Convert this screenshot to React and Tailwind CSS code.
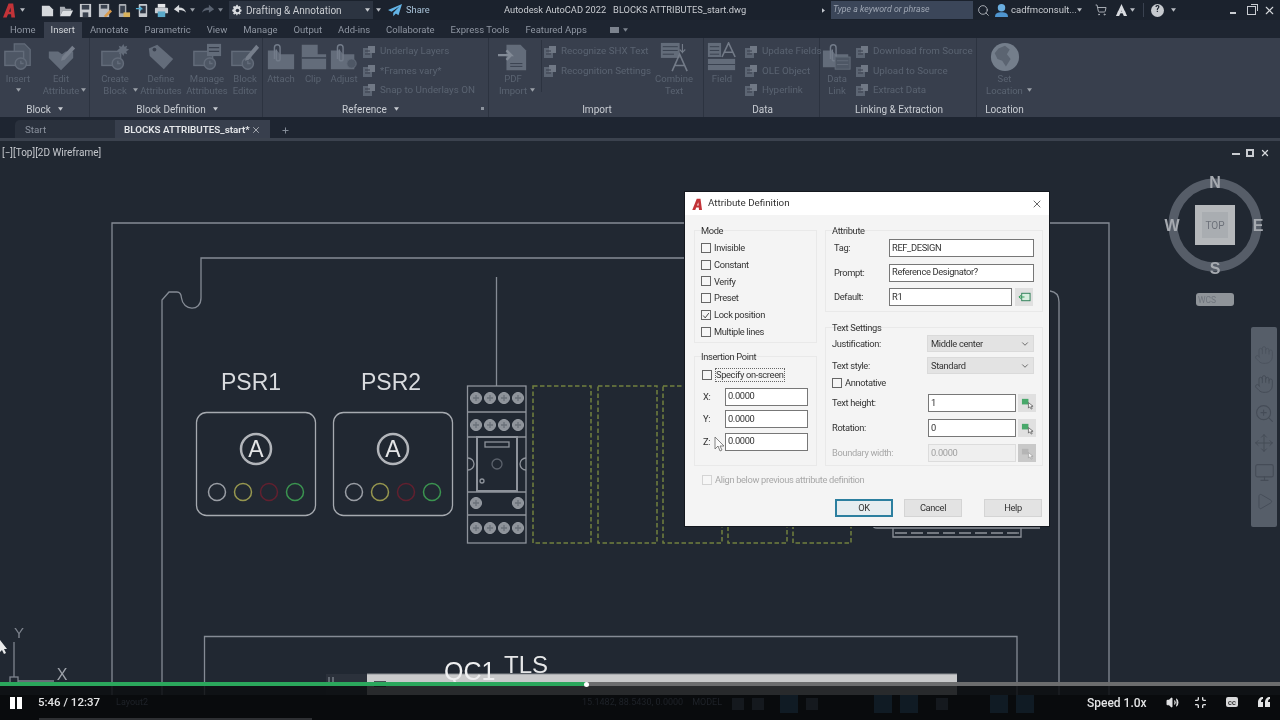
import React from "react";
import {
  ChevronDown,
  X,
  Search,
  ShoppingCart,
  Hand,
  ZoomIn,
  Move,
  Monitor,
  Play,
  Volume2,
  Minimize,
  Plus,
} from "lucide-react";

const Caret = ({ className = "" }) => (
  <svg viewBox="0 0 6 4" className={`w-[5px] h-[4px] shrink-0 ${className}`}>
    <path d="M0 0h6L3 4z" fill="currentColor" />
  </svg>
);

// ---------- title bar icons ----------
const Logo = ({ className }) => (
  <svg viewBox="0 0 14 16" className={className}>
    <path d="M0 16 6 1h5l2 15H9l-.3-3.400H5.400L4 16zM6.500 10h2L8 5.500z" fill="#c23338" fillRule="evenodd" />
  </svg>
);

const Qat = ({ children }) => (
  <svg viewBox="0 0 16 16" className="w-[15px] h-[15px] shrink-0">
    {children}
  </svg>
);

const qatIcons = [
  <path key="a" d="M2 3h8l4 4v7H2z" fill="#d5d8dc" />,
  <g key="b">
    <path d="M1 4h5l1 2h6v2H4l-3 6z" fill="#a8adb4" />
    <path d="M4 8h11l-3 6H1z" fill="#dcdfe2" />
  </g>,
  <g key="c">
    <rect x="2" y="1" width="12" height="14" fill="#c9ccd1" />
    <rect x="4" y="2" width="8" height="5" fill="#39414e" />
    <rect x="5" y="10" width="6" height="5" fill="#39414e" />
  </g>,
  <g key="d">
    <rect x="2" y="1" width="11" height="14" fill="#b8bcc2" />
    <rect x="4" y="2" width="7" height="4" fill="#39414e" />
    <path d="M8 13l6-6 2 2-6 6H8z" fill="#d99a4a" />
  </g>,
  <g key="e">
    <rect x="3" y="1" width="8" height="14" rx="1" fill="#a9adb3" />
    <rect x="4.500" y="3" width="5" height="8" fill="#39414e" />
    <rect x="8" y="10" width="7" height="5" fill="#d8b25c" />
  </g>,
  <g key="f">
    <rect x="4" y="1" width="9" height="14" rx="1" fill="#c5c9ce" />
    <rect x="5.500" y="3" width="6" height="8" fill="#2f3744" />
    <path d="M1 6h6l-2-2M7 6 5 8" stroke="#55b2d8" strokeWidth="1.400" fill="none" />
  </g>,
  <g key="g">
    <rect x="4" y="1" width="8" height="4" fill="#e4e6e8" />
    <rect x="1" y="5" width="14" height="6" rx="1" fill="#c7cbd0" />
    <rect x="4" y="9" width="8" height="6" fill="#5aa9c9" />
  </g>,
];

const TitleBar = () => (
  <div className="flex items-center h-[20px] bg-[#1b222d] text-[#c3c7cd] text-[10px] shrink-0">
    <Logo className="w-[13px] h-[16px] ml-[3px]" />
    <Caret className="ml-[4px] text-[#b9bdc3]" />
    <div className="flex items-center gap-[4px] ml-[15px]">
      {qatIcons.map((icon, i) => (
        <Qat key={i}>{icon}</Qat>
      ))}
    </div>
    <svg viewBox="0 0 16 16" className="w-[14px] h-[14px] ml-[4px] shrink-0">
      <path d="M1 7l6-5v3c4 0 7 2 8 6-2-2-4-3-8-3v3z" fill="#d5d8dc" />
    </svg>
    <Caret className="ml-[3px] w-[3px] text-[#9aa0a8]" />
    <svg viewBox="0 0 16 16" className="w-[14px] h-[14px] ml-[6px] shrink-0">
      <path d="M15 7 9 2v3C5 5 2 7 1 11c2-2 4-3 8-3v3z" fill="#596270" />
    </svg>
    <Caret className="ml-[3px] w-[3px] text-[#7d848f]" />
    <div className="flex items-center w-[144px] h-[18px] ml-[6px] bg-[#2c3441] pl-[2px]">
      <svg viewBox="0 0 16 16" className="w-[13px] h-[13px]">
        <path
          d="M8 1l1 2 2-.5 1 1.500-1 2 2 1v2l-2 1 1 2-1.500 1-2-1-1 2H7l-1-2-2 1-1.500-1 1-2-2-1v-2l2-1-1-2 1-1.500 2 .5L7 1z"
          fill="#d8dbdf"
        />
        <circle cx="8" cy="8" r="2.200" fill="#2c3441" />
      </svg>
      <span className="ml-[2px] text-[10px] text-[#c9ccd1]">Drafting &amp; Annotation</span>
      <Caret className="ml-auto mr-[3px] text-[#c9ccd1]" />
    </div>
    <Caret className="ml-[3px] w-[4px] text-[#b9bdc3]" />
    <svg viewBox="0 0 16 16" className="w-[14px] h-[14px] ml-[7px] shrink-0">
      <path d="M16 1 0 8l4 2 9-6-7 7v4l3-3 3 2z" fill="#63b4e6" />
    </svg>
    <span className="ml-[4px] w-[26px] text-[#a9c3d8] text-[9.300px]">Share</span>
    <span className="ml-[72px] w-[318px] text-[9.300px] text-[#c9ccd1] whitespace-pre">
      Autodesk AutoCAD 2022   BLOCKS ATTRIBUTES_start.dwg
    </span>
    <svg viewBox="0 0 4 6" className="w-[3px] h-[5px] shrink-0 text-[#c3c7cd]">
      <path d="M0 0l4 3-4 3z" fill="currentColor" />
    </svg>
    <div className="flex items-center w-[142px] h-[18px] ml-[6px] bg-[#3b4659] pl-[2px] text-[#9ea6b3] text-[8.800px] italic">
      Type a keyword or phrase
    </div>
    <Search size={13} className="ml-[4px] text-[#c0c4ca]" strokeWidth={1.500} />
    <svg viewBox="0 0 14 16" className="w-[13px] h-[15px] ml-[5px] shrink-0">
      <circle cx="7" cy="5" r="4" fill="#6aaee0" />
      <path d="M0 15c0-4 3-5 7-5s7 1 7 5z" fill="#4f95cf" />
    </svg>
    <span className="ml-[3px] text-[9.500px] text-[#c9ccd1] w-[66px]">cadfmconsult...</span>
    <Caret className="w-[3px] text-[#b9bdc3]" />
    <ShoppingCart size={12} className="ml-[13px] text-[#a8adb4]" />
    <svg viewBox="0 0 14 14" className="w-[13px] h-[13px] ml-[8px] shrink-0">
      <path d="M7 0l6 13H9.500L7 7l-2.500 6H1z" fill="#d8dbdf" />
      <rect x="3" y="8" width="8" height="2" fill="#d8dbdf" />
    </svg>
    <Caret className="ml-[2px] w-[3px] text-[#b9bdc3]" />
    <div className="w-px h-[14px] bg-[#3a4250] ml-[8px]" />
    <div className="flex items-center justify-center w-[13px] h-[13px] ml-[7px] rounded-full bg-[#c6c9ce] text-[#1b222d] text-[9px] font-bold">
      ?
    </div>
    <Caret className="ml-[7px] w-[3px] text-[#b9bdc3]" />
    <div className="w-[6px] h-[1.500px] bg-[#c9ccd1] ml-[54px] mt-[6px]" />
    <div className="relative w-[9px] h-[9px] ml-[11px] border border-[#c9ccd1]">
      <div className="absolute -top-[3px] -right-[3px] w-[7px] h-[7px] border-t border-r border-[#c9ccd1]" />
    </div>
    <X size={13} strokeWidth={2} className="ml-[7px] text-[#d5d8dc]" />
  </div>
);

const tabNames = [
  "Home",
  "Insert",
  "Annotate",
  "Parametric",
  "View",
  "Manage",
  "Output",
  "Add-ins",
  "Collaborate",
  "Express Tools",
  "Featured Apps",
];

const RibbonTabs = () => (
  <div className="flex items-end h-[18px] bg-[#1e2531] pl-[2px] text-[9.500px] shrink-0">
    {tabNames.map((t) =>
      t === "Insert" ? (
        <div key={t} className="flex items-center h-[16px] pt-[1px] px-[7px] bg-[#383f4d] text-[#d4d7db]">
          {t}
        </div>
      ) : (
        <div key={t} className="flex items-center h-[16px] pt-[1px] px-[8px] text-[#8f96a2]">
          {t}
        </div>
      ),
    )}
    <div className="flex items-center gap-[4px] h-[16px] ml-[15px]">
      <div className="w-[9px] h-[6px] bg-[#7c838e]" />
      <Caret className="w-[3px] text-[#7c838e]" />
    </div>
  </div>
);

// ---------- ribbon icons ----------
const Ico = ({ children, className = "w-[30px] h-[30px]" }) => (
  <svg viewBox="0 0 32 32" className={`shrink-0 ${className}`}>
    {children}
  </svg>
);

const c1 = "#636c7a";
const c2 = "#4e5765";

const BlockBase = () => (
  <g fill="none" stroke={c1} strokeWidth="1.500">
    <rect x="2" y="10" width="20" height="15" fill={c2} />
    <circle cx="19" cy="23" r="6" fill={c2} />
    <path d="M19 20v3h3" />
  </g>
);

const Clip = () => (
  <path
    d="M9 18V6a3 3 0 0 1 6 0v12a2 2 0 0 1-4 0V8"
    fill="none"
    stroke="#737c8a"
    strokeWidth="1.500"
  />
);

const icons = {
  insert: (
    <>
      <path d="M12 2h11l6 6v17H12z" fill={c2} stroke={c1} strokeWidth="1.300" />
      <BlockBase />
    </>
  ),
  edit: (
    <>
      <path d="M3 10h10l4 3 4-3h8v7L16 30 3 17z" fill={c1} />
      <path d="M17 16 28 4l3 3-11 12-4 1z" fill="#767e8b" />
    </>
  ),
  create: (
    <>
      <BlockBase />
      <path d="M25 2l1 3 3-1-1 3 3 1-3 2 1 3-3-1-1 3-2-3-3 1 1-3-3-1 3-2-1-3 3 1z" fill={c1} />
    </>
  ),
  define: (
    <>
      <path d="M3 7 12 3l17 15-10 11L4 15z" fill={c1} />
      <circle cx="9" cy="8" r="2" fill="#383f4d" />
    </>
  ),
  manage: (
    <>
      <BlockBase />
      <rect x="16" y="2" width="15" height="13" fill={c1} />
      <path d="M18 6h11M18 10h11" stroke="#383f4d" strokeWidth="1.500" />
    </>
  ),
  editor: (
    <>
      <BlockBase />
      <path d="M17 16 28 3l3 3-11 13-4 1z" fill="#767e8b" />
    </>
  ),
  attach: (
    <>
      <path d="M2 9h10l3 4h15v16H2z" fill={c1} />
      <Clip />
    </>
  ),
  clip: (
    <>
      <path d="M4 3h17v10h9v16H4z" fill={c1} />
      <path d="M4 17h26" stroke="#383f4d" strokeWidth="1.500" />
    </>
  ),
  adjust: (
    <>
      <path d="M2 9h10l3 4h12v16H2z" fill={c1} />
      <Clip />
      <circle cx="24" cy="23" r="5" fill={c2} stroke={c1} />
    </>
  ),
  pdf: (
    <>
      <path d="M9 3h15l6 6v21H9z" fill={c1} />
      <path d="M0 14h14l-5-5M14 14l-5 5" stroke="#828a96" strokeWidth="2.500" fill="none" />
      <path d="M13 23h13M13 26h13" stroke="#383f4d" />
    </>
  ),
  combine: (
    <>
      <rect x="2" y="1" width="20" height="16" fill={c1} />
      <path d="M4 5h16M4 9h16M4 13h12" stroke="#383f4d" />
      <path d="M14 31 22 13l8 18M17 25h10" fill="none" stroke="#737b88" strokeWidth="1.700" />
      <path d="M25 2v9l-3-3M25 11l3-3" stroke="#737b88" strokeWidth="1.200" fill="none" />
    </>
  ),
  field: (
    <>
      <rect x="1" y="1" width="14" height="15" fill={c1} />
      <path d="M3 5h10M3 9h10M3 13h10" stroke="#383f4d" />
      <path d="M16 16 23 1l7 15M19 11h8" fill="none" stroke="#737b88" strokeWidth="1.700" />
      <rect x="1" y="18" width="29" height="12" fill={c1} />
      <path d="M1 24h29" stroke="#383f4d" />
    </>
  ),
  datalink: (
    <>
      <path d="M1 9h10l3 4h14v14H1z" fill={c1} />
      <Clip />
      <rect x="14" y="16" width="16" height="13" fill={c2} stroke={c1} />
      <path d="M16 20h12M16 24h12" stroke={c1} />
    </>
  ),
  globe: (
    <>
      <circle cx="16" cy="16" r="15" fill="#747e8b" />
      <path d="M9 7l7-3 5 4-3 5 4 5-5 8-4-6-5-2-3-6z" fill="#5b6471" />
    </>
  ),
};

const smallIcon = (
  <svg viewBox="0 0 14 14" className="w-[14px] h-[14px] shrink-0">
    <rect x="1" y="3" width="9" height="10" fill="#5c6573" />
    <rect x="6" y="1" width="7" height="7" fill="#707885" />
    <path d="M3 6h5M3 9h5" stroke="#383f4d" />
  </svg>
);

const Tool = ({ icon, lines, width, caret }) => (
  <div className={`flex flex-col items-center pt-[4px] shrink-0 relative ${width}`}>
    <Ico>{icons[icon]}</Ico>
    <div className="mt-[1px] text-center text-[9.500px] leading-[12px] text-[#5a6371] whitespace-nowrap">
      {lines.map((l) => (
        <div key={l}>{l}</div>
      ))}
      {caret === "below" && <Caret className="mx-auto mt-[3px] w-[3px] h-[3px] text-[#9aa0a8]" />}
    </div>
    {caret === "side" && (
      <Caret className="absolute right-0 top-[50px] w-[3px] h-[3px] text-[#9aa0a8]" />
    )}
  </div>
);

const SmallList = ({ items, className = "" }) => (
  <div className={`flex flex-col pt-[4px] shrink-0 ${className}`}>
    {items.map((t) => (
      <div key={t} className="flex items-center h-[19.500px] text-[9.800px] text-[#5a6371] whitespace-nowrap">
        {smallIcon}
        <span className="ml-[4px]">{t}</span>
      </div>
    ))}
  </div>
);

const Panel = ({ className, title, caret, launcher, children }) => (
  <div className={`flex flex-col shrink-0 border-r border-[#2c3340] ${className}`}>
    <div className="flex h-[62px]">{children}</div>
    <div className={`relative flex items-center justify-center gap-[7px] h-[17px] pt-[1px] text-[10px] text-[#c8ccd2] ${launcher ? "pr-[12px]" : ""}`}>
      {title}
      {caret && <Caret className="text-[#c8ccd2]" />}
      {launcher && <div className="absolute right-[4px] top-[7px] w-[3px] h-[3px] bg-[#8b929c]" />}
    </div>
  </div>
);

const Ribbon = () => (
  <div className="flex h-[79px] bg-[#383f4d] shrink-0">
    <Panel className="w-[90px]" title="Block" caret>
      <Tool icon="insert" lines={["Insert"]} width="w-[36px]" caret="below" />
      <Tool icon="edit" lines={["Edit", "Attribute"]} width="w-[50px]" caret="side" />
    </Panel>
    <Panel className="w-[173px] pl-[2px]" title="Block Definition" caret>
      <Tool icon="create" lines={["Create", "Block"]} width="w-[46px]" caret="side" />
      <Tool icon="define" lines={["Define", "Attributes"]} width="w-[46px]" />
      <Tool icon="manage" lines={["Manage", "Attributes"]} width="w-[46px]" />
      <Tool icon="editor" lines={["Block", "Editor"]} width="w-[30px]" />
    </Panel>
    <Panel className="w-[226px] pl-[2px]" title="Reference" caret launcher>
      <Tool icon="attach" lines={["Attach"]} width="w-[32px]" />
      <Tool icon="clip" lines={["Clip"]} width="w-[32px]" />
      <Tool icon="adjust" lines={["Adjust"]} width="w-[30px]" />
      <SmallList className="ml-[3px]" items={["Underlay Layers", "*Frames vary*", "Snap to Underlays ON"]} />
    </Panel>
    <Panel className="w-[215px] pl-[2px]" title="Import">
      <Tool icon="pdf" lines={["PDF", "Import"]} width="w-[44px]" caret="side" />
      <div className="w-px h-[52px] mt-[2px] ml-[6px] bg-[#2c3340]" />
      <SmallList className="w-[109px] ml-[1px]" items={["Recognize SHX Text", "Recognition Settings"]} />
      <Tool icon="combine" lines={["Combine", "Text"]} width="w-[44px]" />
    </Panel>
    <Panel className="w-[116px] pl-[2px]" title="Data">
      <Tool icon="field" lines={["Field"]} width="w-[32px]" />
      <SmallList className="ml-[6px]" items={["Update Fields", "OLE Object", "Hyperlink"]} />
    </Panel>
    <Panel className="w-[157px] pl-[2px]" title="Linking &amp; Extraction">
      <Tool icon="datalink" lines={["Data", "Link"]} width="w-[30px]" />
      <SmallList className="ml-[3px]" items={["Download from Source", "Upload to Source", "Extract  Data"]} />
    </Panel>
    <Panel className="w-[55px] border-r-0" title="Location">
      <Tool icon="globe" lines={["Set", "Location"]} width="w-full" caret="side" />
    </Panel>
  </div>
);

const DocTabs = () => (
  <div className="flex items-end h-[21px] bg-[#1e2531] pl-[15px] text-[9.800px] shrink-0">
    <div className="flex items-center w-[100px] h-[18px] pt-[2px] pl-[10px] bg-[#2a313d] text-[#8a919d] rounded-tl-[5px]">Start</div>
    <div className="flex items-center w-[155px] h-[18px] pt-[2px] pl-[9px] bg-[#383f4d] text-[#e4e6e9] font-semibold">
      BLOCKS ATTRIBUTES_start*
      <X size={10} strokeWidth={2} className="ml-auto mr-[9px] text-[#b9bdc3]" />
    </div>
    <div className="flex items-center justify-center w-[30px] h-[18px] pt-[2px] text-[#8a919d]">
      <Plus size={9} strokeWidth={2.500} />
    </div>
  </div>
);

// ---------- drawing ----------
const line = "#858b95";

const Screws = ({ y, xs = [476, 490, 504, 518] }) =>
  xs.map((x) => (
    <g key={x}>
      <circle cx={x} cy={y} r="5.500" fill="#8e939a" stroke="#9a9fa6" />
      <path d={`M${x - 3} ${y}h6M${x} ${y - 3}v6`} stroke="#6b717a" strokeWidth="1.300" />
    </g>
  ));

const Psr = ({ x, cx, name, tx }) => (
  <g>
    <text x={tx} y="390" textAnchor="middle" fill="#d9dbde" className="font-['Liberation_Sans',sans-serif] text-[23px]">
      {name}
    </text>
    <rect x={x} y="412.500" width="119" height="103" rx="10" fill="none" stroke="#a6aab0" strokeWidth="1.300" />
    <circle cx={cx} cy="449" r="15" fill="none" stroke="#b2b5ba" strokeWidth="2.500" />
    <text x={cx} y="457" textAnchor="middle" fill="#e4e5e7" className="font-['Liberation_Sans',sans-serif] text-[23px]">
      A
    </text>
    {[
      ["#9a9ea5", -39],
      ["#97974f", -13],
      ["#62202f", 13],
      ["#3b9450", 39],
    ].map(([col, dx]) => (
      <circle key={dx} cx={cx + dx} cy="492" r="8.500" fill="none" stroke={col} strokeWidth="1.500" />
    ))}
  </g>
);

const Drawing = () => (
  <svg viewBox="0 141 1280 579" className="block w-full h-full">
    <g fill="none" stroke={line} strokeWidth="1.300">
      <path d="M112 720V223H1109V720" />
      <path d="M162 720V300L169 292H177Q181 292 181.500 298C183 311 201 312 201 298V258H1050" />
      <path d="M1047 291H1050Q1059 292 1059 302V720" />
      <path d="M204.500 720V636.500H1017V720" />
      <path d="M496.500 277V386" />
    </g>

    <Psr x={196.500} cx={256} name="PSR1" tx={251} />
    <Psr x={333.500} cx={393} name="PSR2" tx={391} />

    {/* contactor */}
    <g fill="none" stroke="#8e939b" strokeWidth="1.300">
      <rect x="467.500" y="386" width="58.500" height="157" />
      <path d="M467.500 412H526M467.500 437H526M467.500 492H526M467.500 515H526" />
      <rect x="477" y="437" width="40" height="54" strokeWidth="2" />
      <rect x="485" y="442" width="24" height="5" />
      <circle cx="497" cy="464" r="5" stroke="#5c626c" />
      <circle cx="482" cy="481" r="2" />
      <path d="M468 458a6 6 0 0 1 0 12M526 458a6 6 0 0 0 0 12" />
    </g>
    <Screws y={398} />
    <Screws y={425} />
    <Screws y={503} xs={[476, 518]} />
    <Screws y={528} />

    {/* empty slots */}
    <g fill="none" stroke="#71803f" strokeWidth="1.500" strokeDasharray="4.500 2.500">
      <rect x="533" y="386" width="58" height="157" />
      <rect x="598" y="386" width="59" height="157" />
      <rect x="663" y="386" width="59" height="157" />
      <rect x="728" y="386" width="59" height="157" />
      <rect x="793" y="386" width="58" height="157" />
    </g>

    {/* part under the dialog */}
    <g fill="none" stroke="#8e939b" strokeWidth="1.300">
      <path d="M873 522v3q0 3 4 3H1040" />
      <path d="M893 528v9H1021V528" />
      <path d="M895 533H1019" strokeDasharray="12 4" />
    </g>

    {/* horizontal scroll bar of the drawing */}
    <rect x="326" y="674" width="41" height="21" fill="#2b313b" />
    <path d="M329 677v5M333 677v5" stroke="#767c85" strokeWidth="1.500" />
    <rect x="367" y="674" width="590" height="21" fill="#c9cacb" />
    <path d="M367 674H957" stroke="#8d9095" />
    <rect x="374" y="681" width="12" height="6" fill="#4a4e54" />

    <text x="444" y="680" fill="#eeeff0" className="font-['Liberation_Sans',sans-serif] text-[25px]">
      QC1
    </text>
    <text x="504" y="673" fill="#e6e7e8" className="font-['Liberation_Sans',sans-serif] text-[24px]">
      TLS
    </text>

    {/* ucs icon */}
    <g fill="none" stroke="#7e848e" strokeWidth="1.300">
      <path d="M14 642V677M18 681H54" />
      <rect x="10" y="677" width="8" height="6" />
    </g>
    <text x="19" y="638" textAnchor="middle" fill="#7e848e" className="font-['Liberation_Sans',sans-serif] text-[15px]">
      Y
    </text>
    <text x="62" y="680" textAnchor="middle" fill="#9da2a9" className="font-['Liberation_Sans',sans-serif] text-[16px]">
      X
    </text>
    <path d="M0 640l7 9-3 0 2 4-2 1-2-4-2 2z" fill="#e9eaeb" />

    {/* view cube */}
    <circle cx="1215" cy="225" r="42" fill="none" stroke="#565d68" strokeWidth="9" />
    <g className="font-['Liberation_Sans',sans-serif] text-[16px] font-bold" fill="#a6aab0" textAnchor="middle">
      <text x="1215" y="188">N</text>
      <text x="1172" y="231">W</text>
      <text x="1258" y="231">E</text>
      <text x="1215" y="274">S</text>
    </g>
    <rect x="1195" y="205" width="40" height="40" fill="#b5b8bb" />
    <rect x="1202" y="212" width="26" height="26" fill="#a9adb1" />
    <text x="1215" y="229" textAnchor="middle" fill="#6d727a" className="font-['Roboto',sans-serif] text-[10px]">
      TOP
    </text>
    <rect x="1196" y="293" width="38" height="13" rx="3" fill="#8f9499" />
    <text x="1198" y="303" fill="#6f757d" className="font-['Roboto',sans-serif] text-[8.500px]">
      WCS
    </text>
  </svg>
);

// ---------- dialog ----------
const Check = ({ checked, label, dim, focus, className = "" }) => (
  <div className={`flex items-center ${className}`}>
    <div
      className={`flex items-center justify-center w-[10px] h-[10px] border bg-[#f6f6f6] ${
        dim ? "border-[#d4d4d4]" : "border-[#666]"
      }`}
    >
      {checked && (
        <svg viewBox="0 0 10 10" className="w-[9px] h-[9px]">
          <path d="M1.500 5l2.500 3 4.500-6" fill="none" stroke="#444" strokeWidth="1.200" />
        </svg>
      )}
    </div>
    <span
      className={`ml-[3px] ${dim ? "text-[#a8a8a8]" : "text-[#333]"} ${
        focus ? "border border-dotted border-[#666] leading-[12px]" : ""
      }`}
    >
      {label}
    </span>
  </div>
);

const Group = ({ title, className = "", children }) => (
  <div className={`flex flex-col border border-[#e9e9e9] px-[6px] ${className}`}>
    <div className="-mt-[7px] h-[14px] leading-[14px] text-[#333]">{title}</div>
    {children}
  </div>
);

const Input = ({ value, className = "", dim }) => (
  <div
    className={`flex items-center h-[18px] pl-[2px] pb-[1px] ${
      dim
        ? "border border-[#dcdcdc] bg-[#efefef] text-[#a0a0a0]"
        : "border border-[#777] bg-white text-[#333]"
    } ${className}`}
  >
    {value}
  </div>
);

const Pick = ({ dim }) => (
  <div className={`flex items-center justify-center w-[18px] h-[18px] ml-[2px] ${dim ? "bg-[#c9c9c9]" : "bg-[#e0e0e0]"}`}>
    <svg viewBox="0 0 14 14" className="w-[13px] h-[13px]">
      <rect x="1" y="2" width="7" height="6" fill={dim ? "#b5b5b5" : "#48a86a"} />
      <path d="M8 6v6l1.500-1.500L11 13l1-.5-1-2.500h2z" fill="#f5f5f5" stroke={dim ? "#999" : "#444"} strokeWidth=".7" />
    </svg>
  </div>
);

const Select = ({ value, className = "" }) => (
  <div className={`flex items-center justify-between w-[107px] h-[17px] pl-[3px] pr-[3px] bg-[#e3e3e3] border border-[#dadada] text-[#333] ${className}`}>
    {value}
    <ChevronDown size={10} className="text-[#555]" />
  </div>
);

const Btn = ({ label, primary, className = "" }) => (
  <div
    className={`flex items-center justify-center w-[58px] h-[18px] border text-[#333] ${
      primary ? "border-[#2c7f9f] border-2 bg-[#e6edf0]" : "border-[#d4d4d4] bg-[#e3e3e3]"
    } ${className}`}
  >
    {label}
  </div>
);

const Dialog = () => (
  <div className="absolute left-[685px] top-[51px] w-[364px] h-[334px] flex flex-col bg-[#f4f4f4] text-[9.300px] tracking-[-0.35px] shadow-[0_0_0_1px_#14181f]">
    <div className="flex items-center h-[23px] bg-white px-[7px] shrink-0">
      <Logo className="w-[11px] h-[12px]" />
      <span className="ml-[5px] text-[9.800px] tracking-normal text-[#333]">Attribute Definition</span>
      <X size={12} strokeWidth={1.500} className="ml-auto mr-[-1px] text-[#333]" />
    </div>
    <div className="flex gap-[8px] pl-[9px] pt-[15px] shrink-0">
      <div className="flex flex-col w-[123px]">
        <Group title="Mode" className="h-[113px]">
          <div className="flex flex-col pt-[1.500px]">
            <Check label="Invisible" className="h-[16.800px]" />
            <Check label="Constant" className="h-[16.800px]" />
            <Check label="Verify" className="h-[16.800px]" />
            <Check label="Preset" className="h-[16.800px]" />
            <Check checked label="Lock position" className="h-[16.800px]" />
            <Check label="Multiple lines" className="h-[16.800px]" />
          </div>
        </Group>
        <Group title="Insertion Point" className="h-[110px] mt-[13px]">
          <Check focus label="Specify on-screen" className="h-[17px] mt-[2.500px] ml-[1px]" />
          <div className="flex flex-col gap-[4.500px] mt-[4px]">
            {["X:", "Y:", "Z:"].map((a) => (
              <div key={a} className="flex items-center">
                <span className="w-[24px] pl-[2px] text-[#333]">{a}</span>
                <Input value="0.0000" className="w-[83px]" />
              </div>
            ))}
          </div>
        </Group>
      </div>
      <div className="flex flex-col w-[218px]">
        <Group title="Attribute" className="h-[82px]">
          <div className="flex flex-col gap-[6.500px] mt-[1px]">
            <div className="flex items-center">
              <span className="w-[57px] pl-[2px] text-[#333]">Tag:</span>
              <Input value="REF_DESIGN" className="w-[145px]" />
            </div>
            <div className="flex items-center">
              <span className="w-[57px] pl-[2px] text-[#333]">Prompt:</span>
              <Input value="Reference Designator?" className="w-[145px]" />
            </div>
            <div className="flex items-center">
              <span className="w-[57px] pl-[2px] text-[#333]">Default:</span>
              <Input value="R1" className="w-[123px]" />
              <div className="flex items-center justify-center w-[18px] h-[18px] ml-[3px] bg-[#e0e0e0]">
                <svg viewBox="0 0 14 10" className="w-[13px] h-[10px]">
                  <rect x="4" y="1" width="9" height="8" fill="#d9eee0" stroke="#2b7d55" />
                  <path d="M1 5h6M1 5l2-2M1 5l2 2" stroke="#2b9d55" fill="none" />
                </svg>
              </div>
            </div>
          </div>
        </Group>
        <Group title="Text Settings" className="h-[139px] mt-[15px]">
          <div className="flex items-center justify-between">
            <span className="text-[#333]">Justification:</span>
            <Select value="Middle center" className="mr-[2px]" />
          </div>
          <div className="flex items-center justify-between mt-[5px]">
            <span className="text-[#333]">Text style:</span>
            <Select value="Standard" className="mr-[2px]" />
          </div>
          <Check label="Annotative" className="h-[14px] mt-[2px]" />
          <div className="flex items-center mt-[4px]">
            <span className="w-[96px] text-[#333]">Text height:</span>
            <Input value="1" className="w-[88px]" />
            <Pick />
          </div>
          <div className="flex items-center mt-[7px]">
            <span className="w-[96px] text-[#333]">Rotation:</span>
            <Input value="0" className="w-[88px]" />
            <Pick />
          </div>
          <div className="flex items-center mt-[7px]">
            <span className="w-[96px] text-[#a8a8a8]">Boundary width:</span>
            <Input dim value="0.0000" className="w-[88px]" />
            <Pick dim />
          </div>
        </Group>
      </div>
    </div>
    <Check dim label="Align below previous attribute definition" className="h-[18px] mt-[5px] ml-[17px]" />
    <div className="flex justify-end gap-[11px] mt-[10px] pr-[7px]">
      <Btn primary label="OK" />
      <Btn label="Cancel" />
      <Btn label="Help" className="ml-[11px]" />
    </div>
    {/* mouse pointer */}
    <svg viewBox="0 0 11 16" className="absolute left-[29px] top-[244px] w-[11px] h-[16px]">
      <path d="M1 1v12l3-3 2 5 2-1-2-4h4z" fill="#fafafa" stroke="#666" strokeWidth=".8" />
    </svg>
  </div>
);

const NavBar = () => (
  <div className="absolute right-[3px] top-[186px] flex flex-col items-center gap-[9px] w-[26px] h-[200px] pt-[18px] bg-[#565e69] rounded-[2px] text-[#454c57]">
    <Hand size={20} strokeWidth={1.200} className="opacity-60" />
    <Hand size={20} strokeWidth={1.200} />
    <ZoomIn size={21} strokeWidth={1.200} />
    <Move size={20} strokeWidth={1.200} />
    <Monitor size={21} strokeWidth={1.200} />
    <Play size={19} strokeWidth={1.200} />
  </div>
);

// ---------- video player overlay ----------
const Player = () => (
  <div className="absolute inset-x-0 bottom-0 flex flex-col h-[39px]">
    <div className="relative flex h-[4px] mt-[1px] bg-[#6c6d6e]">
      <div className="w-[586px] bg-[#2ba75c]" />
      <div className="absolute left-[584px] -top-[0.500px] w-[5px] h-[5px] rounded-full bg-white" />
    </div>
    <div className="h-[9px] bg-[#0c0e10]/85" />
    <div className="relative flex items-start flex-1 bg-[#090b0d] text-[11.500px] text-[#e3e4e5]">
      <div className="flex gap-[2px] ml-[10px] mt-[2px]">
        <div className="w-[5px] h-[12px] bg-white" />
        <div className="w-[5px] h-[12px] bg-white" />
      </div>
      <span className="ml-[16px] -mt-[1px] font-medium">5:46 / 12:37</span>
      <span className="ml-[16px] mt-[1px] text-[9px] text-[#1f2329]">Layout2</span>
      <span className="ml-[434px] mt-[1px] text-[9px] text-[#1f2329]">15.1482, 88.5430, 0.0000</span>
      <span className="ml-[9px] mt-[1px] text-[9px] text-[#1f2329]">MODEL</span>
      <div className="flex items-center gap-[8px] ml-[10px]">
        <div className="w-[12px] h-[12px] bg-[#15191e]" />
        <div className="w-[12px] h-[12px] bg-[#15191e]" />
        <div className="w-[18px] h-[18px] ml-[8px] bg-[#101b24]" />
        <div className="w-[12px] h-[12px] bg-[#15191e]" />
        <div className="w-[18px] h-[18px] ml-[48px] bg-[#101b24]" />
        <div className="w-[18px] h-[18px] bg-[#101b24]" />
        <div className="w-[12px] h-[12px] ml-[10px] bg-[#15191e]" />
        <div className="w-[18px] h-[18px] ml-[34px] bg-[#101b24]" />
        <div className="w-[18px] h-[18px] bg-[#101b24]" />
      </div>
      <span className="absolute left-[1087px] -top-[1px] text-[12px] font-medium">Speed 1.0x</span>
      <Volume2 size={13} fill="#e3e4e5" className="absolute left-[1166px] top-[1px]" />
      <Minimize size={13} strokeWidth={2.500} className="absolute left-[1194px] top-[1px]" />
      <div className="absolute left-[1226px] top-[2px] flex items-center justify-center w-[12px] h-[10px] rounded-[2px] bg-[#d8d9da] text-[#222] text-[6px] font-bold">
        CC
      </div>
      <svg viewBox="0 0 12 10" className="absolute left-[1258px] top-[2px] w-[12px] h-[10px]">
        <path d="M0 10V5.500C0 2 2 0 5 0v2C3.500 2 3 3.500 3 5h2v5zM7 10V5.500C7 2 9 0 12 0v2c-1.500 0-2 1.500-2 3h2v5z" fill="#e3e4e5" />
      </svg>
      <div className="absolute left-[39px] bottom-0 w-[273px] h-[2px] bg-[#2e3033]" />
    </div>
  </div>
);

export default function App() {
  return (
    <div className="relative flex flex-col w-[1280px] h-[720px] overflow-hidden bg-[#212832] font-['Roboto',sans-serif] blur-[0.5px]">
      <TitleBar />
      <RibbonTabs />
      <Ribbon />
      <DocTabs />
      <div className="h-[3px] bg-[#3b424e] shrink-0" />
      <div className="relative flex-1">
        <Drawing />
        <div className="absolute inset-x-0 top-0 flex items-center justify-between h-[23px] pl-[2px] pr-[10px] text-[10px] text-[#c5c8cd]">
          <span>[&minus;][Top][2D Wireframe]</span>
          <div className="flex items-center gap-[6px]">
            <div className="w-[8px] h-[2px] bg-[#c9ccd1] mt-[3px]" />
            <div className="w-[8px] h-[8px] border-2 border-[#c9ccd1]" />
            <X size={10} strokeWidth={3} className="text-[#d5d8dc]" />
          </div>
        </div>
        <Dialog />
        <NavBar />
      </div>
      <Player />
    </div>
  );
}
